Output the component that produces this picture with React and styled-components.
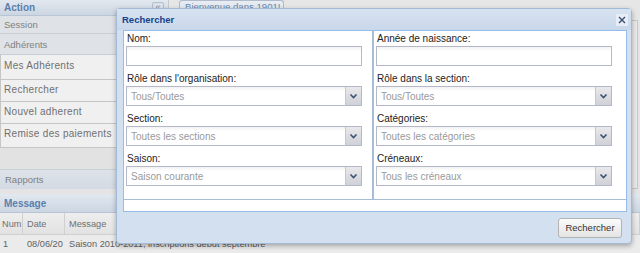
import React from 'react';
import styled, { createGlobalStyle } from 'styled-components';

const GlobalStyle = createGlobalStyle`
  html, body { margin: 0; padding: 0; }
  body {
    font-family: "Liberation Sans", Arial, sans-serif;
    background: #e4e4e4;
  }
`;

const Screen = styled.div`
  position: relative;
  width: 640px;
  height: 253px;
  overflow: hidden;
  background: #e4e4e4;
  display: flex;
  flex-direction: column;
`;

const Top = styled.div`
  display: flex;
  height: 190px;
`;

const Side = styled.div`
  width: 168px;
  display: flex;
  flex-direction: column;
  background: #e0e0e0;
  border-right: 1px solid #c8c8c8;
`;

const PanelHead = styled.div`
  height: ${({ $h }) => $h || 16}px;
  box-sizing: border-box;
  display: flex;
  align-items: center;
  justify-content: space-between;
  padding: 0 4px 0 4px;
  background: linear-gradient(#e2e8ef, #ccd6e2);
  border-bottom: 1px solid #b8c5d5;
  color: #5b7fad;
  font-weight: bold;
  font-size: 10px;
`;

const Collapse = styled.span`
  width: 10px;
  height: 10px;
  border: 1px solid #b3bfcd;
  border-radius: 2px;
  background: #dbe2ea;
  color: #7d8ea5;
  font-size: 9px;
  line-height: 9px;
  text-align: center;
  font-weight: normal;
`;

const SectionRow = styled.div`
  height: ${({ $h }) => $h}px;
  box-sizing: border-box;
  display: flex;
  align-items: center;
  padding-left: 4px;
  background: #dfe3e8;
  border-bottom: 1px solid #c9ced5;
  color: #808080;
  font-size: 9.5px;
`;

const MenuItem = styled.div`
  height: ${({ $h }) => $h}px;
  box-sizing: border-box;
  padding: ${({ $pt }) => $pt || 5}px 0 0 3px;
  background: #f0f0f0;
  border: 1px solid #c6c6c6;
  border-top: none;
  color: #707070;
  font-size: 10px;
  letter-spacing: 0.3px;
  white-space: nowrap;
`;

const Filler = styled.div`
  flex: 1;
  background: #e2e2e2;
`;

const Rapports = styled.div`
  height: 20px;
  box-sizing: border-box;
  display: flex;
  align-items: center;
  padding-left: 5px;
  background: linear-gradient(#dee3e9, #d3dae3);
  border-top: 1px solid #c8ced6;
  color: #808080;
  font-size: 9.5px;
`;

const Main = styled.div`
  flex: 1;
  display: flex;
  flex-direction: column;
`;

const TabStrip = styled.div`
  height: 20px;
  display: flex;
  align-items: flex-end;
  padding-left: 10px;
  background: #e6e6e6;
`;

const Tab = styled.div`
  width: 105px;
  height: 20px;
  box-sizing: border-box;
  border: 1px solid #b0bccb;
  border-bottom: none;
  border-radius: 3px 3px 0 0;
  background: linear-gradient(#e8edf3, #d6dee8);
  color: #6a87ad;
  font-size: 9.6px;
  padding: 0 0 0 5px;
  white-space: nowrap;
`;

const MainBody = styled.div`
  flex: 1;
  background: #e8e8e8;
  border: 1px solid #c8c8c8;
  margin-right: 2px;
`;

const MessagePanel = styled.div`
  margin-top: 5px;
  display: flex;
  flex-direction: column;
  flex: 1;
`;

const Table = styled.div`
  display: grid;
  grid-template-columns: 23px 42px 1fr;
  font-size: 9.2px;
`;

const Th = styled.div`
  height: 22px;
  box-sizing: border-box;
  display: flex;
  align-items: center;
  padding-left: ${({ $pl }) => $pl || 4}px;
  background: linear-gradient(#eeeeee, #e2e2e2);
  border-right: 1px solid #d0d0d0;
  border-bottom: 1px solid #d0d0d0;
  color: #707070;
`;

const Td = styled.div`
  height: 18px;
  display: flex;
  align-items: center;
  padding-left: ${({ $pl }) => $pl || 4}px;
  background: #ebebeb;
  color: #606060;
  white-space: nowrap;
`;

/* dialog */

const Dialog = styled.div`
  position: absolute;
  left: 116px;
  top: 8px;
  width: 516px;
  height: 236px;
  box-sizing: border-box;
  display: flex;
  flex-direction: column;
  background: #d3e0ef;
  border: 1px solid #a3bad6;
  border-radius: 4px;
  box-shadow: 0 2px 5px rgba(0, 0, 0, 0.3);
`;

const DialogHead = styled.div`
  height: 21px;
  display: flex;
  align-items: center;
  justify-content: space-between;
  padding: 0 3px 0 5px;
  background: linear-gradient(#d8e3f0, #c8d7ea);
  color: #15428b;
  font-weight: bold;
  font-size: 9.5px;
`;

const Close = styled.span`
  width: 12px;
  height: 12px;
  display: flex;
  align-items: center;
  justify-content: center;
  background: #e6edf6;
  border-radius: 1px;
`;

const DialogBody = styled.div`
  margin: 0 4px 0 6px;
  background: #fff;
  border: 1px solid #99bbe8;
  display: flex;
  flex-direction: column;
`;

const Columns = styled.div`
  display: grid;
  grid-template-columns: 250px 1fr;
  border-bottom: 1px solid #a7bcd6;
`;

const Column = styled.div`
  display: flex;
  flex-direction: column;
  padding: 0 0 8px 2px;
  border-right: ${({ $last }) => ($last ? 'none' : '2px solid #a7bcd6')};
`;

const Label = styled.div`
  height: 15px;
  line-height: 15px;
  font-size: 10px;
  color: #222;
  padding-left: 1px;
`;

const Field = styled.div`
  width: 236px;
  height: 20px;
  box-sizing: border-box;
  margin-bottom: 5px;
  display: flex;
  border: 1px solid #b5b8c8;
  background: linear-gradient(#f2f2f2, #fff 4px);
`;

const Value = styled.div`
  flex: 1;
  display: flex;
  align-items: center;
  padding-left: 4px;
  font-size: 10px;
  color: #9a9a9a;
`;

const Trigger = styled.div`
  width: 15px;
  display: flex;
  align-items: center;
  justify-content: center;
  border-left: 1px solid #c4c7d2;
  background: linear-gradient(#e9e9ec, #cfd1d8);
`;

const Spacer = styled.div`
  height: 11px;
`;

const Footer = styled.div`
  flex: 1;
  display: flex;
  align-items: center;
  justify-content: flex-end;
  padding-right: 9px;
`;

const Button = styled.button`
  width: 64px;
  height: 20px;
  border: 1px solid #b3b3b3;
  border-radius: 3px;
  background: linear-gradient(#fbfbfb, #e4e4e4);
  font-family: "Liberation Sans", Arial, sans-serif;
  font-size: 9.5px;
  color: #333;
  padding: 0;
`;

const Chevron = () => (
  <svg width="9" height="7" viewBox="0 0 9 7">
    <polyline points="1.5,1.5 4.5,4.5 7.5,1.5" fill="none" stroke="#3f4f70" strokeWidth="1.6" />
  </svg>
);

const Input = () => (
  <Field>
    <Value />
  </Field>
);

const Select = ({ value }) => (
  <Field>
    <Value>{value}</Value>
    <Trigger>
      <Chevron />
    </Trigger>
  </Field>
);

const leftFields = [
  { label: 'Nom:' },
  { label: "Rôle dans l'organisation:", value: 'Tous/Toutes' },
  { label: 'Section:', value: 'Toutes les sections' },
  { label: 'Saison:', value: 'Saison courante' },
];

const rightFields = [
  { label: 'Année de naissance:' },
  { label: 'Rôle dans la section:', value: 'Tous/Toutes' },
  { label: 'Catégories:', value: 'Toutes les catégories' },
  { label: 'Créneaux:', value: 'Tous les créneaux' },
];

const FormColumn = ({ fields, last }) => (
  <Column $last={last}>
    {fields.map((f) => (
      <React.Fragment key={f.label}>
        <Label>{f.label}</Label>
        {f.value ? <Select value={f.value} /> : <Input />}
      </React.Fragment>
    ))}
  </Column>
);

export default function App() {
  return (
    <Screen>
      <GlobalStyle />
      <Top>
        <Side>
          <PanelHead>
            Action
            <Collapse>«</Collapse>
          </PanelHead>
          <SectionRow $h={18}>Session</SectionRow>
          <SectionRow $h={21}>Adhérents</SectionRow>
          <MenuItem $h={25}>Mes Adhérents</MenuItem>
          <MenuItem $h={22} $pt={4}>Rechercher</MenuItem>
          <MenuItem $h={22} $pt={4}>Nouvel adherent</MenuItem>
          <MenuItem $h={24} $pt={4}>Remise des paiements</MenuItem>
          <Filler />
          <Rapports>Rapports</Rapports>
        </Side>
        <Main>
          <TabStrip>
            <Tab>Bienvenue dans 1901!</Tab>
          </TabStrip>
          <MainBody />
        </Main>
      </Top>
      <MessagePanel>
        <PanelHead $h={19}>Message</PanelHead>
        <Table>
          <Th $pl={2}>Num</Th>
          <Th>Date</Th>
          <Th>Message</Th>
          <Td $pl={3}>1</Td>
          <Td>08/06/20</Td>
          <Td $pl={4}>Saison 2010-2011, inscriptions debut septembre</Td>
        </Table>
      </MessagePanel>

      <Dialog>
        <DialogHead>
          Rechercher
          <Close>
            <svg width="8" height="8" viewBox="0 0 8 8">
              <path d="M1 1L7 7M7 1L1 7" stroke="#3d4f6e" strokeWidth="1.4" />
            </svg>
          </Close>
        </DialogHead>
        <DialogBody>
          <Columns>
            <FormColumn fields={leftFields} />
            <FormColumn fields={rightFields} last />
          </Columns>
          <Spacer />
        </DialogBody>
        <Footer>
          <Button>Rechercher</Button>
        </Footer>
      </Dialog>
    </Screen>
  );
}
